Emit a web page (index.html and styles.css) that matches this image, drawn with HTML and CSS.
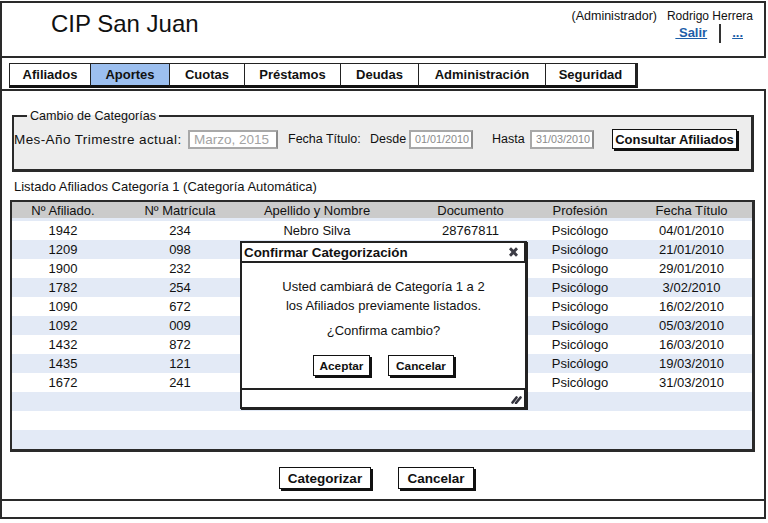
FILE: index.html
```html
<!DOCTYPE html>
<html lang="es">
<head>
<meta charset="utf-8">
<title>CIP San Juan</title>
<link rel="stylesheet" href="styles.css">
</head>
<body>
<div class="app">
  <header class="header">
    <div class="title">CIP San Juan</div>
    <div class="user">
      <div class="user-line"><span class="role">(Administrador)</span><span>Rodrigo Herrera</span></div>
      <div class="user-links"><a class="link">&nbsp;Salir</a><span class="sep"></span><a class="link">...</a></div>
    </div>
  </header>
  <nav class="tabbar">
    <div class="tabs">
      <div class="tab t1">Afiliados</div>
      <div class="tab t2 active">Aportes</div>
      <div class="tab t3">Cuotas</div>
      <div class="tab t4">Préstamos</div>
      <div class="tab t5">Deudas</div>
      <div class="tab t6">Administración</div>
      <div class="tab t7">Seguridad</div>
    </div>
  </nav>
  <main class="main">
    <fieldset class="panel">
      <legend>Cambio de Categorías</legend>
      <div class="filter-row">
        <span class="lbl lbl-mes">Mes-Año Trimestre actual:</span>
        <div class="input inp-mes">Marzo, 2015</div>
        <span class="lbl lbl-fecha">Fecha Título:</span>
        <span class="lbl lbl-desde">Desde</span>
        <div class="input inp-date">01/01/2010</div>
        <span class="lbl lbl-hasta">Hasta</span>
        <div class="input inp-date">31/03/2010</div>
        <button class="btn btn-consult">Consultar Afiliados</button>
      </div>
    </fieldset>
    <div class="list-title">Listado Afiliados Categoría 1 (Categoría Automática)</div>
    <div class="grid">
      <div class="row head"><div>Nº Afiliado.</div><div>Nº Matrícula</div><div>Apellido y Nombre</div><div>Documento</div><div>Profesión</div><div>Fecha Título</div></div>
      <div class="row"><div>1942</div><div>234</div><div>Nebro Silva</div><div>28767811</div><div>Psicólogo</div><div>04/01/2010</div></div>
      <div class="row alt"><div>1209</div><div>098</div><div></div><div></div><div>Psicólogo</div><div>21/01/2010</div></div>
      <div class="row"><div>1900</div><div>232</div><div></div><div></div><div>Psicólogo</div><div>29/01/2010</div></div>
      <div class="row alt"><div>1782</div><div>254</div><div></div><div></div><div>Psicólogo</div><div>3/02/2010</div></div>
      <div class="row"><div>1090</div><div>672</div><div></div><div></div><div>Psicólogo</div><div>16/02/2010</div></div>
      <div class="row alt"><div>1092</div><div>009</div><div></div><div></div><div>Psicólogo</div><div>05/03/2010</div></div>
      <div class="row"><div>1432</div><div>872</div><div></div><div></div><div>Psicólogo</div><div>16/03/2010</div></div>
      <div class="row alt"><div>1435</div><div>121</div><div></div><div></div><div>Psicólogo</div><div>19/03/2010</div></div>
      <div class="row"><div>1672</div><div>241</div><div></div><div></div><div>Psicólogo</div><div>31/03/2010</div></div>
      <div class="row alt"></div>
      <div class="row"></div>
      <div class="row alt"></div>
    </div>
    <div class="actions">
      <button class="btn btn-cat">Categorizar</button>
      <button class="btn btn-cancel">Cancelar</button>
    </div>
  </main>
  <footer class="footer"></footer>

  <div class="dialog">
    <div class="dlg-title">
      <span>Confirmar Categorización</span>
      <svg class="close-ic" width="11" height="10" viewBox="0 0 11 10"><path d="M1 2.2 L3 0.3 L5.5 2.8 L8 0.3 L10 2.2 L7.5 5 L10 7.8 L8 9.7 L5.5 7.2 L3 9.7 L1 7.8 L3.5 5 Z" fill="#3c3c46"/></svg>
    </div>
    <div class="dlg-body">
      <p class="line">Usted cambiará de Categoría 1 a 2</p>
      <p class="line">los Afiliados previamente listados.</p>
      <p class="line q">¿Confirma cambio?</p>
      <div class="dlg-btns">
        <button class="btn btn-sm btn-ok">Aceptar</button>
        <button class="btn btn-sm btn-no">Cancelar</button>
      </div>
    </div>
    <div class="dlg-foot">
      <svg class="resize-ic" width="11" height="10" viewBox="0 0 11 10"><path d="M1.5 8.5 L5.5 3.5 M5 9 L9.5 3.5" stroke="#33333d" stroke-width="2.6" stroke-linecap="round" fill="none"/></svg>
    </div>
  </div>
</div>
</body>
</html>
```

FILE: styles.css
```css
body {
  margin: 0;
  background: #fff;
  font-family: "Liberation Sans", Arial, sans-serif;
  color: #111;
}

.app {
  position: relative;
  width: 766px;
  margin-top: 1px;
}

/* Header */
.header {
  box-sizing: border-box;
  height: 57px;
  border: 2px solid #2a2a2a;
  display: flex;
}
.title {
  flex: 1;
  font-size: 24px;
  line-height: 28px;
  padding: 7px 0 0 49px;
}
.user {
  display: flex;
  flex-direction: column;
  align-items: flex-end;
  padding-right: 11px;
}
.user-line {
  margin-top: 6px;
  font-size: 12px;
  line-height: 14px;
  display: flex;
  gap: 10px;
}
.role { font-size: 12.5px; }
.user-links {
  display: flex;
  align-items: center;
  height: 16px;
  margin-top: 2px;
  margin-right: 10px;
}
.link {
  font-weight: bold;
  font-size: 13px;
  line-height: 16px;
  color: #1d5ea8;
  text-decoration: underline;
}
.sep {
  width: 2px;
  height: 19px;
  background: #333;
  margin: 0 11px 0 12px;
}

/* Tabs */
.tabbar {
  box-sizing: border-box;
  height: 33px;
  border-left: 2px solid #2a2a2a;
  border-bottom: 2px solid #2a2a2a;
  padding: 5px 0 0 7px;
}
.tabs {
  display: flex;
}
.tab {
  box-sizing: border-box;
  height: 25px;
  border: 1px solid #222;
  border-bottom: 3px solid #111;
  margin-left: -1px;
  font-weight: bold;
  font-size: 13px;
  display: flex;
  align-items: center;
  justify-content: center;
  background: #fff;
}
.tab.active { background: #9cbfef; }
.t1 { width: 82px; margin-left: 0; }
.t2 { width: 80px; }
.t3 { width: 76px; }
.t4 { width: 97px; }
.t5 { width: 79px; }
.t6 { width: 128px; }
.t7 { width: 93px; border-right-width: 3px; }

/* Main */
.main {
  box-sizing: border-box;
  height: 408px;
  border-left: 2px solid #2a2a2a;
  border-right: 2px solid #2a2a2a;
  padding-top: 17px;
}
.panel {
  margin: 0 10px;
  padding: 4px 0 19px 0;
  border-style: solid;
  border-color: #2a2a2a;
  border-width: 2px 3px 3px 2px;
  background: #ededed;
  min-width: 0;
}
.panel legend {
  margin-left: 13px;
  padding: 0 3px;
  font-size: 12.6px;
  line-height: 16px;
}
.filter-row {
  display: flex;
  align-items: center;
  height: 22px;
}
.lbl {
  white-space: nowrap;
  flex: none;
}
.lbl-mes { width: 174px; font-size: 13.5px; letter-spacing: 0.4px; }
.lbl-fecha { width: 82px; margin-left: 10px; font-size: 12.5px; }
.lbl-desde { width: 39px; font-size: 12.5px; }
.lbl-hasta { width: 38px; margin-left: 19px; font-size: 12.5px; }
.input {
  box-sizing: border-box;
  flex: none;
  height: 19px;
  border: 2px solid #a8a8a8;
  border-right-color: #8c8c8c;
  background: #fff;
  display: flex;
  align-items: center;
  padding-left: 4px;
  white-space: nowrap;
}
.inp-mes { width: 90px; font-size: 13.5px; color: #a3a3a3; }
.inp-date { width: 64px; font-size: 10.8px; color: #8a8a8a; }

.btn {
  box-sizing: border-box;
  flex: none;
  background: #fff;
  border: 1.5px solid #111;
  box-shadow: 2px 2px 0 #111;
  font-family: inherit;
  font-weight: bold;
  color: #111;
  padding: 0;
  white-space: nowrap;
}
.btn-consult {
  margin-left: 18px;
  width: 125px;
  height: 20px;
  font-size: 13px;
}

.list-title {
  margin: 7px 0 0 12px;
  font-size: 13px;
  line-height: 16px;
}

/* Grid table */
.grid {
  box-sizing: border-box;
  width: 745px;
  margin: 5px 0 0 8px;
  border-style: solid;
  border-color: #2a2a2a;
  border-width: 2px 3px 3px 2px;
  font-size: 13px;
}
.row {
  display: grid;
  grid-template-columns: 108px 126px 146px 133px 110px 117px;
  height: 19px;
  align-items: center;
  text-align: center;
}
.row > div:nth-child(1) { padding-right: 6px; }
.row > div:nth-child(2) { padding-right: 6px; }
.row > div:nth-child(3) { padding-right: 4px; }
.row > div:nth-child(4) { padding-left: 24px; }
.row > div:nth-child(6) { padding-right: 4px; }
.row.alt { background: #e3eaf6; }
.row.head {
  height: 16px;
  background: #cbcbcb;
  border-bottom: 3px solid #e3eaf6;
}

.actions {
  display: flex;
  margin: 15px 0 0 277px;
}
.btn-cat { width: 92px; height: 22px; font-size: 13.5px; }
.btn-cancel { width: 76px; height: 22px; font-size: 13.5px; margin-left: 27px; }

.footer {
  box-sizing: border-box;
  height: 20px;
  border: 2px solid #2a2a2a;
}

/* Dialog */
.dialog {
  position: absolute;
  left: 240px;
  top: 240px;
  width: 287px;
  box-shadow: 1px 1px 0 #222;
}
.dlg-title {
  box-sizing: border-box;
  height: 22px;
  border: 2px solid #222;
  border-right-width: 3px;
  background: #fff;
  display: flex;
  align-items: center;
  justify-content: space-between;
  padding: 0 5px 0 2px;
  font-weight: bold;
  font-size: 13.4px;
}
.dlg-body {
  box-sizing: border-box;
  height: 125px;
  border-left: 2px solid #222;
  border-right: 2px solid #222;
  background: #fff;
  text-align: center;
  padding-top: 14px;
  font-size: 13px;
}
.line {
  margin: 0;
  line-height: 19px;
}
.line.q { margin-top: 6px; }
.dlg-btns {
  display: flex;
  justify-content: center;
  gap: 18px;
  margin-top: 15px;
}
.btn-sm { height: 21px; font-size: 11.8px; }
.btn-ok { width: 57px; }
.btn-no { width: 66px; }
.dlg-foot {
  box-sizing: border-box;
  height: 21px;
  border: 2px solid #222;
  border-right-width: 3px;
  background: #fff;
  display: flex;
  align-items: center;
  justify-content: flex-end;
  padding-right: 2px;
}
```
